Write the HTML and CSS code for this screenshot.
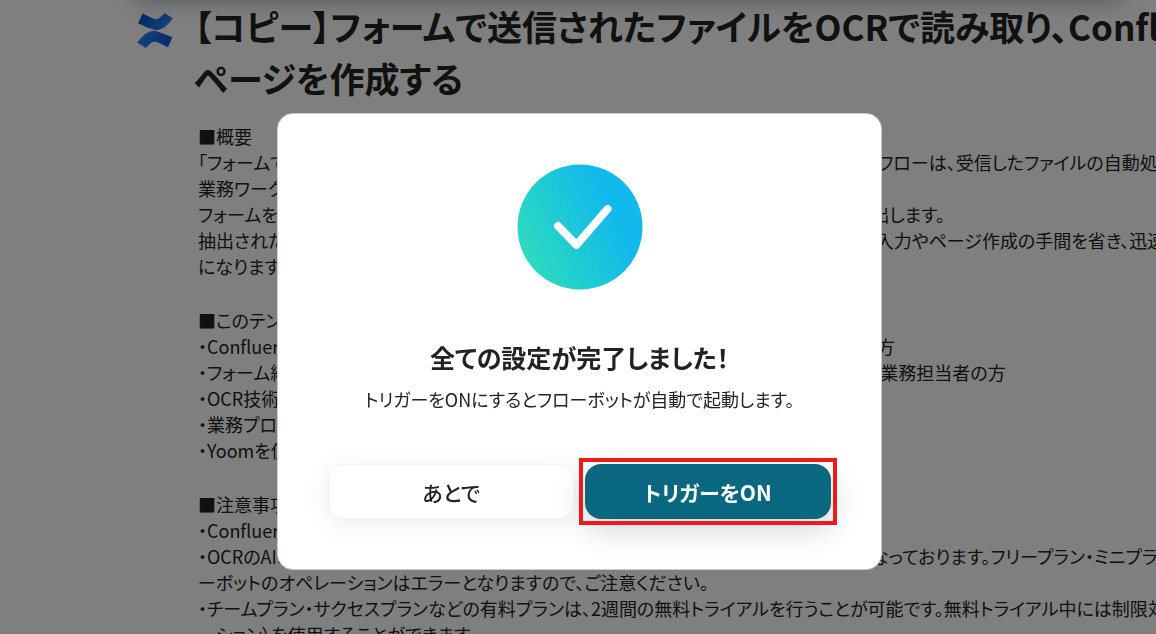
FILE: index.html
```html
<!DOCTYPE html>
<html lang="ja">
<head>
    <meta charset="UTF-8">
    <meta name="viewport" content="width=device-width, initial-scale=1.0">
    <title>フローボット設定</title>
    <link rel="stylesheet" href="styles.css">
</head>
<body>
    <div class="header-shadow"></div>

    <!-- テンプレートの説明 -->
    <main class="template">
        <svg class="template-icon" viewBox="0 0 38 38" aria-hidden="true">
            <defs>
                <linearGradient id="blue-top" x1="0" y1="0.2" x2="1" y2="0.5">
                    <stop offset="0" stop-color="#0052cc"/>
                    <stop offset="0.7" stop-color="#2478f0"/>
                    <stop offset="1" stop-color="#2684ff"/>
                </linearGradient>
                <linearGradient id="blue-bottom" x1="1" y1="0.8" x2="0" y2="0.5">
                    <stop offset="0" stop-color="#0052cc"/>
                    <stop offset="0.7" stop-color="#2478f0"/>
                    <stop offset="1" stop-color="#2684ff"/>
                </linearGradient>
            </defs>
            <path fill="url(#blue-top)" d="M6.500 2.500 L17 7.500 Q20 8.800 22.500 7.500 Q24.500 6.500 28.500 2 L37 7.300 Q28.500 19 20.500 19.300 Q17.500 19.300 2 12.500 Z"/>
            <path fill="url(#blue-bottom)" d="M32 36.200 L21.500 31.300 Q18.500 30 16 31.300 Q14 32.300 10 37 L1 31.500 Q10 19.800 18 19.700 Q21 19.700 36.300 26.300 Z"/>
        </svg>
        <div class="template-text">
            <h1>【コピー】フォームで送信されたファイルをOCRで読み取り、Confluenceの<br>ページを作成する</h1>
            <div class="description">
                <section>
                    <p>■概要</p>
                    <p>「フォームで送信されたファイルをOCRで読み取り、Confluenceのページを自動作成する」フローは、受信したファイルの自動処理を行う</p>
                    <p>業務ワークフローです。</p>
                    <p>フォームを通じて送信されたファイルをOCR機能で読み取り、必要な情報を全て自動で抽出します。</p>
                    <p>抽出されたデータは直接Confluenceのページに自動で反映されるため、手動でのデータ入力やページ作成の手間を省き、迅速な情報共有が可能</p>
                    <p>になります。</p>
                </section>
                <section>
                    <p>■このテンプレートをおすすめする方</p>
                    <p>・Confluenceを活用して管理を行っているが、ページの作成や更新に手間暇を感じている方</p>
                    <p>・フォーム経由で受け取ったファイルの内容確認や転記をさらに効率化したいと考えている業務担当者の方</p>
                    <p>・OCR技術を活用してデータ入力を自動化したい方</p>
                    <p>・業務プロセスの改善を目指している方</p>
                    <p>・Yoomを使って業務を自動化したい方</p>
                </section>
                <section>
                    <p>■注意事項</p>
                    <p>・ConfluenceとYoomを連携してください。</p>
                    <p>・OCRのAIオペレーションはチームプラン・サクセスプランでのみご利用いただける機能となっております。フリープラン・ミニプランの場合は設定しているフロ</p>
                    <p>ーボットのオペレーションはエラーとなりますので、ご注意ください。</p>
                    <p>・チームプラン・サクセスプランなどの有料プランは、2週間の無料トライアルを行うことが可能です。無料トライアル中には制限対象のアプリ</p>
                    <p>　ション）を使用することができます。</p>
                </section>
            </div>
        </div>
    </main>

    <!-- 設定完了モーダル -->
    <div class="overlay">
        <div class="modal" role="dialog" aria-modal="true" aria-labelledby="modal-title">
            <svg class="modal-check" viewBox="0 0 126 126" aria-hidden="true">
                <defs>
                    <linearGradient id="check-bg" x1="0.05" y1="0.75" x2="0.78" y2="0.4">
                        <stop offset="0" stop-color="#2edbbe"/>
                        <stop offset="1" stop-color="#11b9ec"/>
                    </linearGradient>
                </defs>
                <circle cx="63" cy="63" r="62.500" fill="url(#check-bg)"/>
                <path d="M41 62 L59.500 81 L90.500 45" fill="none" stroke="#fff" stroke-width="8" stroke-linecap="round" stroke-linejoin="round"/>
            </svg>
            <h2 id="modal-title">全ての設定が完了しました！</h2>
            <p class="modal-note">トリガーをONにするとフローボットが自動で起動します。</p>
            <div class="modal-actions">
                <button type="button" class="btn">あとで</button>
                <div class="highlight">
                    <button type="button" class="btn btn-primary">トリガーをON</button>
                </div>
            </div>
        </div>
    </div>
</body>
</html>
```

FILE: styles.css
```css
* { box-sizing: border-box; margin: 0; padding: 0; }
body {
    height: 100vh;
    overflow: hidden;
    background: #fff;
    color: #222;
    font-family: "Noto Sans CJK JP", sans-serif;
    font-feature-settings: "palt";
}

/* 上部ヘッダーの影 */
.header-shadow {
    position: absolute;
    top: -40px;
    left: 136px;
    right: 36px;
    height: 40px;
    box-shadow: 0 0 20px 4px rgba(40, 60, 80, 0.3);
}

/* テンプレート */
.template { display: flex; align-items: flex-start; gap: 20px; padding-left: 136px; }
.template-icon { flex: none; width: 38px; height: 38px; margin-top: 11px; }
.template-text { white-space: nowrap; }
h1 { font-size: 35px; font-weight: 700; line-height: 52px; }
.description { padding: 19px 4px; font-size: 18px; line-height: 26px; }
.description section { margin-bottom: 28px; }

/* モーダル */
.overlay {
    position: fixed;
    inset: 0;
    display: flex;
    justify-content: center;
    align-items: flex-start;
    padding: 113px 0 0 3px;
    background: rgba(0, 0, 0, 0.5);
}
.modal {
    display: flex;
    flex-direction: column;
    align-items: center;
    width: 605px;
    max-width: 100%;
    padding: 50px;
    border: 1px solid #ccc;
    border-radius: 16px;
    background: #fff;
}
.modal-check { width: 126px; height: 126px; }
h2 { margin-top: 47px; font-size: 25px; font-weight: 700; line-height: 40px; }
.modal-note { margin-top: 9px; font-size: 18px; line-height: 26px; }
.modal-actions {
    display: grid;
    grid-template-columns: 1fr 1fr;
    gap: 10px;
    width: 100%;
    margin-top: 52px;
}
.btn {
    width: 100%;
    height: 55px;
    border: 1px solid #f3f3f3;
    border-radius: 16px;
    background: #fff;
    box-shadow: 0 4px 24px rgba(0, 0, 0, 0.08);
    color: #222;
    font: inherit;
    font-size: 21px;
    font-weight: 500;
    font-feature-settings: inherit;
    cursor: pointer;
}
.btn-primary {
    border: 0;
    background: #0a6780;
    box-shadow: 0 10px 30px rgba(20, 30, 50, 0.2);
    color: #fff;
    font-weight: 700;
}
.highlight { position: relative; }
.highlight::after {
    content: "";
    position: absolute;
    inset: -6px;
    border: 4px solid #e81c1c;
    pointer-events: none;
}
```
